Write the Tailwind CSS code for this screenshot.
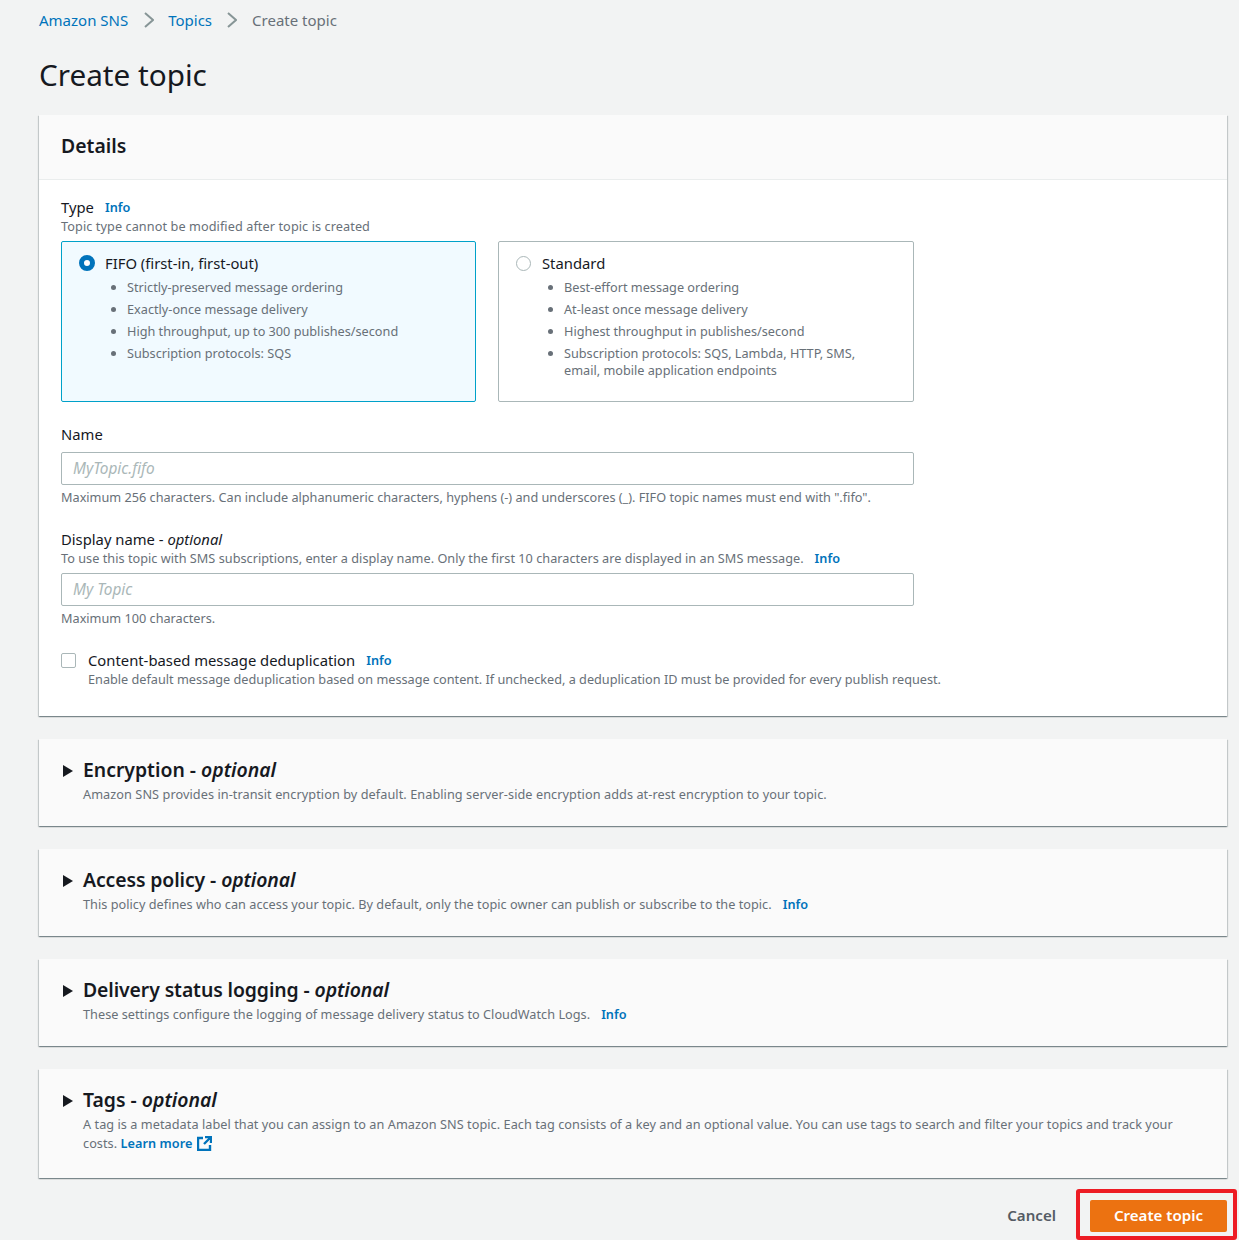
<!DOCTYPE html>
<html><head><meta charset="utf-8"><script src="https://cdn.jsdelivr.net/npm/@tailwindcss/browser@4"></script></head>
<body class="bg-[#f2f3f3] font-['Noto_Sans',sans-serif] text-[#16191f] text-[14.8px] h-[1240px] overflow-hidden">
<div class="relative h-[1240px] pl-[39px] pr-[12px] overflow-hidden">
  <nav class="h-[42px] pb-[2px] flex items-center text-[15px] text-[#687078]">
    <a class="text-[#0073bb]">Amazon SNS</a>
    <svg class="w-[10px] h-[16px] ml-[16px] mr-[14px]" viewBox="0 0 10 16" fill="none" stroke="#879596" stroke-width="2"><path d="M1 1l8 7-8 7"/></svg>
    <a class="text-[#0073bb]">Topics</a>
    <svg class="w-[10px] h-[16px] mx-[15px]" viewBox="0 0 10 16" fill="none" stroke="#879596" stroke-width="2"><path d="M1 1l8 7-8 7"/></svg>
    <span>Create topic</span>
  </nav>
  <h1 class="h-[73px] pt-[13px] text-[29.7px] leading-[40px] font-normal">Create topic</h1>

  <section class="bg-white h-[601px] shadow-[0_1px_1px_0_rgba(0,28,36,.3),1px_1px_1px_0_rgba(0,28,36,.15),-1px_1px_1px_0_rgba(0,28,36,.15)]">
    <div class="h-[65px] bg-[#fafafa] border-b border-[#eaeded] px-[22px] pb-[2px] flex items-center">
      <h2 class="text-[19.4px] font-semibold">Details</h2>
    </div>
    <div class="px-[22px] pt-[18px]">
      <div class="h-[20px] pb-[2px] flex items-center">Type<a class="ml-[11px] mt-[2px] text-[12.7px] font-semibold text-[#0073bb]">Info</a></div>
      <p class="h-[17px] leading-[17px] text-[12.7px] tracking-[0.08px] text-[#687078]">Topic type cannot be modified after topic is created</p>
      <div class="flex gap-[22px] mt-[6px] w-[853px]">
        <div class="w-[415px] h-[161px] rounded-[2px] border border-[#00a1c9] bg-[#f1faff] pt-[11px] pl-[17px]">
          <div class="flex items-center h-[20px]">
            <span class="w-[16px] h-[16px] rounded-full border-[5px] border-[#0073bb] bg-white"></span>
            <span class="ml-[10px]">FIFO (first-in, first-out)</span>
          </div>
          <ul class="list-disc pl-[65px] -ml-[17px] mt-[6px] text-[12.7px] text-[#687078] leading-[17px] flex flex-col gap-[5px] marker:text-[#687078]">
            <li>Strictly-preserved message ordering</li>
            <li>Exactly-once message delivery</li>
            <li>High throughput, up to 300 publishes/second</li>
            <li>Subscription protocols: SQS</li>
          </ul>
        </div>
        <div class="w-[416px] h-[161px] rounded-[2px] border border-[#aab7b8] bg-white pt-[11px] pl-[17px]">
          <div class="flex items-center h-[20px]">
            <span class="w-[15px] h-[15px] rounded-full border border-[#aab7b8] bg-white"></span>
            <span class="ml-[11px]">Standard</span>
          </div>
          <ul class="list-disc pl-[65px] -ml-[17px] pr-[40px] mt-[6px] text-[12.7px] text-[#687078] leading-[17px] flex flex-col gap-[5px]">
            <li>Best-effort message ordering</li>
            <li>At-least once message delivery</li>
            <li>Highest throughput in publishes/second</li>
            <li>Subscription protocols: SQS, Lambda, HTTP, SMS, email, mobile application endpoints</li>
          </ul>
        </div>
      </div>
      <label class="block mt-[23px] h-[20px] leading-[18px]">Name</label>
      <div class="mt-[7px] w-[853px] h-[33px] border border-[#aab7b8] rounded-[2px] bg-white px-[11px] flex items-center italic text-[15.4px] text-[#aab7b8]">MyTopic.fifo</div>
      <p class="mt-[4px] h-[17px] leading-[17px] text-[12.7px] text-[#687078] whitespace-nowrap">Maximum 256 characters. Can include alphanumeric characters, hyphens (-) and underscores (_). FIFO topic names must end with ".fifo".</p>
      <label class="block mt-[24px] h-[20px] leading-[18px]">Display name - <i>optional</i></label>
      <p class="h-[17px] leading-[17px] text-[12.7px] tracking-[0.025px] text-[#687078] whitespace-nowrap">To use this topic with SMS subscriptions, enter a display name. Only the first 10 characters are displayed in an SMS message.<a class="ml-[11px] font-semibold text-[#0073bb]">Info</a></p>
      <div class="mt-[6px] w-[853px] h-[33px] border border-[#aab7b8] rounded-[2px] bg-white px-[11px] flex items-center italic text-[15.4px] text-[#aab7b8]">My Topic</div>
      <p class="mt-[4px] h-[17px] leading-[17px] text-[12.7px] text-[#687078]">Maximum 100 characters.</p>
      <div class="flex mt-[24px]">
        <span class="w-[15px] h-[15px] mt-[2px] border border-[#aab7b8] rounded-[2px] bg-white"></span>
        <div class="ml-[12px]">
          <div class="h-[20px] pb-[2px] flex items-center">Content-based message deduplication<a class="ml-[11px] mt-[2px] text-[12.7px] font-semibold text-[#0073bb]">Info</a></div>
          <p class="h-[17px] leading-[17px] text-[12.7px] text-[#687078] whitespace-nowrap">Enable default message deduplication based on message content. If unchecked, a deduplication ID must be provided for every publish request.</p>
        </div>
      </div>
    </div>
  </section>

  <section class="mt-[23px] h-[87px] bg-[#fafafa] pl-[24px] pt-[18px] flex shadow-[0_1px_1px_0_rgba(0,28,36,.3),1px_1px_1px_0_rgba(0,28,36,.15),-1px_1px_1px_0_rgba(0,28,36,.15)]">
    <svg class="w-[10px] h-[12px] mt-[8px] shrink-0" viewBox="0 0 10 12"><path d="M0 0l10 6-10 6z" fill="#16191f"/></svg>
    <div class="ml-[10px]">
      <h2 class="text-[19.4px] leading-[26px] font-semibold">Encryption - <i>optional</i></h2>
      <p class="mt-[3px] text-[12.7px] tracking-[0.07px] leading-[17px] text-[#687078]">Amazon SNS provides in-transit encryption by default. Enabling server-side encryption adds at-rest encryption to your topic.</p>
    </div>
  </section>
  <section class="mt-[23px] h-[87px] bg-[#fafafa] pl-[24px] pt-[18px] flex shadow-[0_1px_1px_0_rgba(0,28,36,.3),1px_1px_1px_0_rgba(0,28,36,.15),-1px_1px_1px_0_rgba(0,28,36,.15)]">
    <svg class="w-[10px] h-[12px] mt-[8px] shrink-0" viewBox="0 0 10 12"><path d="M0 0l10 6-10 6z" fill="#16191f"/></svg>
    <div class="ml-[10px]">
      <h2 class="text-[19.4px] leading-[26px] font-semibold tracking-[-0.1px]">Access policy - <i>optional</i></h2>
      <p class="mt-[3px] text-[12.7px] tracking-[0.025px] leading-[17px] text-[#687078]">This policy defines who can access your topic. By default, only the topic owner can publish or subscribe to the topic.<a class="ml-[11px] font-semibold text-[#0073bb]">Info</a></p>
    </div>
  </section>
  <section class="mt-[23px] h-[87px] bg-[#fafafa] pl-[24px] pt-[18px] flex shadow-[0_1px_1px_0_rgba(0,28,36,.3),1px_1px_1px_0_rgba(0,28,36,.15),-1px_1px_1px_0_rgba(0,28,36,.15)]">
    <svg class="w-[10px] h-[12px] mt-[8px] shrink-0" viewBox="0 0 10 12"><path d="M0 0l10 6-10 6z" fill="#16191f"/></svg>
    <div class="ml-[10px]">
      <h2 class="text-[19.4px] leading-[26px] font-semibold tracking-[-0.1px]">Delivery status logging - <i>optional</i></h2>
      <p class="mt-[3px] text-[12.7px] tracking-[0.025px] leading-[17px] text-[#687078]">These settings configure the logging of message delivery status to CloudWatch Logs.<a class="ml-[11px] font-semibold text-[#0073bb]">Info</a></p>
    </div>
  </section>
  <section class="mt-[23px] h-[109px] bg-[#fafafa] pl-[24px] pr-[40px] pt-[18px] flex shadow-[0_1px_1px_0_rgba(0,28,36,.3),1px_1px_1px_0_rgba(0,28,36,.15),-1px_1px_1px_0_rgba(0,28,36,.15)]">
    <svg class="w-[10px] h-[12px] mt-[8px] shrink-0" viewBox="0 0 10 12"><path d="M0 0l10 6-10 6z" fill="#16191f"/></svg>
    <div class="ml-[10px]">
      <h2 class="text-[19.4px] leading-[26px] font-semibold">Tags - <i>optional</i></h2>
      <p class="mt-[2px] text-[12.7px] tracking-[0.05px] leading-[19px] text-[#687078]">A tag is a metadata label that you can assign to an Amazon SNS topic. Each tag consists of a key and an optional value. You can use tags to search and filter your topics and track your costs. <a class="font-semibold text-[#0073bb]">Learn more<svg class="inline-block w-[15px] h-[15px] ml-[5px] align-[-3px]" viewBox="0 0 15 15" fill="none" stroke="#0073bb" stroke-width="2.4"><path d="M6 2H1v12h12V9M8 1h6v6M14 1L7 8"/></svg></a></p>
    </div>
  </section>

  <div class="flex justify-end items-center mt-[22px] h-[32px] text-[15.1px]">
    <a class="font-semibold text-[#545b64] mr-[34px] pb-[2px]">Cancel</a>
    <button class="w-[137px] h-[32px] rounded-[2px] bg-[#ec7211] text-white font-semibold pb-[2px]">Create topic</button>
  </div>
  <div class="absolute left-[1076px] top-[1189px] w-[161px] h-[51px] border-[4px] border-[#ed1c24] rounded-[3px]"></div>
</div>
</body></html>
